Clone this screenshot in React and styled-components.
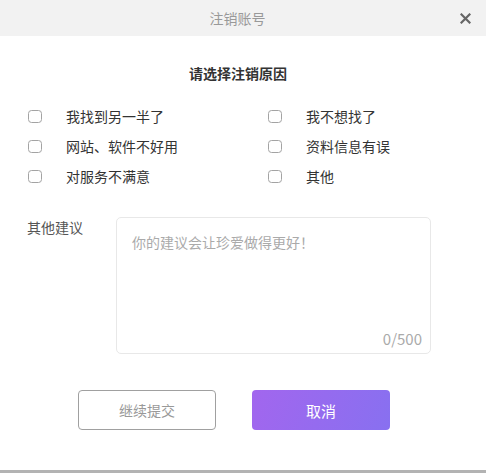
import React, { useState } from 'react';
import styled, { createGlobalStyle } from 'styled-components';

const GlobalStyle = createGlobalStyle`
  html, body {
    margin: 0;
    padding: 0;
    background: #fff;
  }
  body {
    font-family: "Noto Sans CJK SC", "Noto Sans", sans-serif;
  }
`;

const Dialog = styled.div`
  width: 486px;
  height: 473px;
  display: flex;
  flex-direction: column;
  background: #fff;
  border-bottom: 3px solid #b3b3b3;
  box-sizing: border-box;
`;

const Header = styled.div`
  position: relative;
  height: 36px;
  flex-shrink: 0;
  display: flex;
  align-items: center;
  justify-content: center;
  padding-right: 11px;
  background: #f2f2f2;
  color: #999;
  font-size: 14px;
`;

const Close = styled.button`
  position: absolute;
  right: 12px;
  top: 9px;
  width: 18px;
  height: 18px;
  padding: 0;
  border: 0;
  background: none;
  display: flex;
  align-items: center;
  justify-content: center;
  cursor: pointer;
`;

const Body = styled.div`
  flex: 1;
  display: flex;
  flex-direction: column;
  padding-top: 27px;
`;

const Heading = styled.h3`
  margin: 0;
  padding-right: 10px;
  text-align: center;
  font-size: 14px;
  line-height: 20px;
  font-weight: bold;
  color: #333;
`;

const Reasons = styled.div`
  display: grid;
  grid-template-columns: 240px 240px;
  row-gap: 10px;
  margin-top: 23px;
  padding-left: 28px;
`;

const Option = styled.label`
  display: flex;
  align-items: center;
  height: 20px;
  font-size: 14px;
  color: #333;
  cursor: pointer;
`;

const Box = styled.input.attrs({ type: 'checkbox' })`
  appearance: none;
  margin: 0 24px 0 0;
  width: 14px;
  height: 13px;
  border: 1px solid #a3a3a3;
  border-radius: 3.5px;
  box-sizing: border-box;
  background: #fff;
  cursor: pointer;

  &:checked {
    background: #9b6cf0;
    border-color: #9b6cf0;
  }
`;

const Suggest = styled.div`
  display: flex;
  margin-top: 31px;
  padding-left: 27px;
`;

const Label = styled.div`
  width: 89px;
  font-size: 14px;
  line-height: 20px;
  color: #555;
`;

const Field = styled.div`
  position: relative;
  width: 315px;
  height: 137px;
`;

const TextArea = styled.textarea`
  width: 100%;
  height: 100%;
  box-sizing: border-box;
  border: 1px solid #e8e8e8;
  border-radius: 5px;
  padding: 14px 15px 24px;
  resize: none;
  outline: none;
  font-family: inherit;
  font-size: 14px;
  line-height: 20px;
  color: #333;

  &::placeholder {
    color: #aaa;
  }
`;

const Counter = styled.span`
  position: absolute;
  right: 9px;
  bottom: 5px;
  font-size: 15px;
  line-height: 20px;
  color: #aaa;
`;

const Actions = styled.div`
  display: flex;
  gap: 36px;
  margin-top: 36px;
  padding-left: 78px;
`;

const Button = styled.button`
  width: 138px;
  height: 40px;
  box-sizing: border-box;
  border-radius: 4px;
  font-family: inherit;
  font-size: ${(p) => (p.$primary ? '15px' : '14px')};
  cursor: pointer;
  border: ${(p) => (p.$primary ? '0' : '1px solid #a0a0a0')};
  color: ${(p) => (p.$primary ? '#fff' : '#999')};
  background: ${(p) =>
    p.$primary ? 'linear-gradient(110deg, #a266ee 0%, #8870f0 100%)' : '#fff'};
`;

const reasons = [
  '我找到另一半了',
  '我不想找了',
  '网站、软件不好用',
  '资料信息有误',
  '对服务不满意',
  '其他',
];

export default function App() {
  const [text, setText] = useState('');

  return (
    <>
      <GlobalStyle />
      <Dialog>
        <Header>
          注销账号
          <Close aria-label="关闭">
            <svg width="11" height="11" viewBox="0 0 11 11">
              <path d="M1.5 1.5 L9.5 9.5 M9.5 1.5 L1.5 9.5" stroke="#666" strokeWidth="2.2" strokeLinecap="square" />
            </svg>
          </Close>
        </Header>
        <Body>
          <Heading>请选择注销原因</Heading>
          <Reasons>
            {reasons.map((r) => (
              <Option key={r}>
                <Box />
                {r}
              </Option>
            ))}
          </Reasons>
          <Suggest>
            <Label>其他建议</Label>
            <Field>
              <TextArea
                maxLength={500}
                value={text}
                onChange={(e) => setText(e.target.value)}
                placeholder="你的建议会让珍爱做得更好！"
              />
              <Counter>{text.length}/500</Counter>
            </Field>
          </Suggest>
          <Actions>
            <Button>继续提交</Button>
            <Button $primary>取消</Button>
          </Actions>
        </Body>
      </Dialog>
    </>
  );
}
